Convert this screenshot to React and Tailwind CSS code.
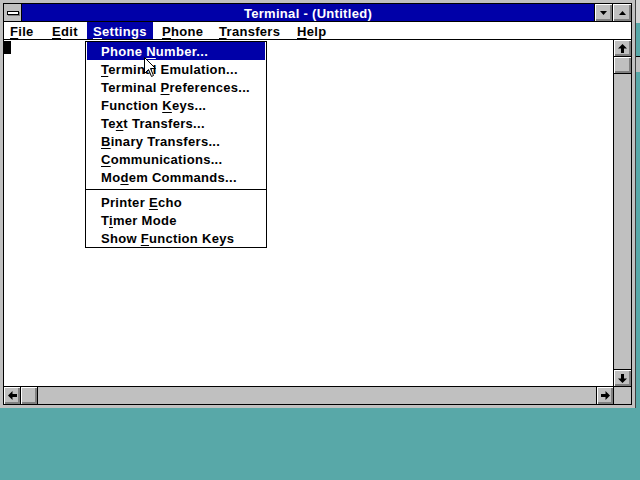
import React from "react";

const bevel = "bg-[#c0c0c0] shadow-[inset_1px_1px_0_#ffffff,inset_-1px_-1px_0_#808080,inset_-2px_-2px_0_#808080]";

function ArrowUp() {
  return (
    <svg width="9" height="9" viewBox="0 0 9 9"><path d="M4.5 0 L9 4.5 L6 4.5 L6 9 L3 9 L3 4.5 L0 4.5 Z" fill="#000" /></svg>
  );
}
function ArrowDown() {
  return (
    <svg width="9" height="9" viewBox="0 0 9 9"><path d="M4.5 9 L9 4.5 L6 4.5 L6 0 L3 0 L3 4.5 L0 4.5 Z" fill="#000" /></svg>
  );
}
function ArrowLeft() {
  return (
    <svg width="9" height="9" viewBox="0 0 9 9"><path d="M0 4.5 L4.5 0 L4.5 3 L9 3 L9 6 L4.5 6 L4.5 9 Z" fill="#000" /></svg>
  );
}
function ArrowRight() {
  return (
    <svg width="9" height="9" viewBox="0 0 9 9"><path d="M9 4.5 L4.5 0 L4.5 3 L0 3 L0 6 L4.5 6 L4.5 9 Z" fill="#000" /></svg>
  );
}

function U({ children }) {
  return <span className="underline underline-offset-[2px] decoration-[1px]">{children}</span>;
}

const items1 = [
  [<>Phone <U>N</U>umber...</>, true],
  [<><U>T</U>erminal Emulation...</>],
  [<>Terminal <U>P</U>references...</>],
  [<>Function <U>K</U>eys...</>],
  [<>Te<U>x</U>t Transfers...</>],
  [<><U>B</U>inary Transfers...</>],
  [<><U>C</U>ommunications...</>],
  [<>Mo<U>d</U>em Commands...</>],
];
const items2 = [
  <>Printer <U>E</U>cho</>,
  <>T<U>i</U>mer Mode</>,
  <>Show <U>F</U>unction Keys</>,
];

export default function App() {
  return (
    <div
      className="relative w-[640px] h-[480px] bg-[#58a8a8] overflow-hidden text-[13px] font-bold leading-none tracking-[0.3px]"
      style={{ fontFamily: '"Liberation Sans", Arial, sans-serif' }}
    >
      {/* sliver of a window behind */}
      <div className="absolute left-[636px] top-0 w-[4px] h-[23px] bg-[#d4d4d4]" />
      <div className="absolute left-[636px] top-[56px] w-[4px] h-[16px] bg-[#c0c0c0] border-t border-black" />

      {/* main window */}
      <div className="w-[636px] h-[408px] bg-[#c0c0c0] p-[3px] border-r border-[#404040]">
        <div className="w-full h-full border border-black flex flex-col">
          {/* title bar */}
          <div className="h-[18px] flex border-b border-black shrink-0">
            <div className="w-[18px] bg-[#c0c0c0] border-r border-black flex items-center justify-center">
              <div className="w-[12px] h-[4px] bg-white border border-black shadow-[1px_1px_0_#808080]" />
            </div>
            <div className="flex-1 bg-[#0000a8] text-white flex items-center justify-center pt-[2px]">
              <span>Terminal - (Untitled)</span>
            </div>
            <div className={`w-[18px] border-l border-black flex items-center justify-center ${bevel}`}>
              <svg width="7" height="4" viewBox="0 0 7 4"><path d="M0 0 L7 0 L3.5 4 Z" fill="#000" /></svg>
            </div>
            <div className={`w-[19px] border-l border-black flex items-center justify-center ${bevel}`}>
              <svg width="7" height="4" viewBox="0 0 7 4"><path d="M0 4 L7 4 L3.5 0 Z" fill="#000" /></svg>
            </div>
          </div>

          {/* menu bar */}
          <div className="h-[18px] bg-white border-b border-black flex items-stretch shrink-0">
            <div className="w-[42px] pl-[6px] pt-[2px] flex items-center"><span><U>F</U>ile</span></div>
            <div className="w-[41px] pl-[6px] pt-[2px] flex items-center"><span><U>E</U>dit</span></div>
            <div className="w-[66px] pl-[6px] pt-[2px] flex items-center bg-[#0000a8] text-white"><span><U>S</U>ettings</span></div>
            <div className="w-[60px] pl-[9px] pt-[2px] flex items-center"><span><U>P</U>hone</span></div>
            <div className="w-[78px] pl-[6px] pt-[2px] flex items-center"><span><U>T</U>ransfers</span></div>
            <div className="pl-[6px] pt-[2px] flex items-center"><span><U>H</U>elp</span></div>
          </div>

          {/* client + vertical scrollbar */}
          <div className="flex-1 flex min-h-0">
            <div className="flex-1 bg-white">
              <div className="w-[7px] h-[13px] bg-black mt-[1px]" />
            </div>
            <div className="w-[18px] border-l border-black bg-[#c0c0c0] flex flex-col">
              <div className={`h-[17px] border-b border-black flex items-center justify-center ${bevel}`}><ArrowUp /></div>
              <div className={`h-[17px] border-b border-black ${bevel}`} />
              <div className="flex-1 bg-[#c0c0c0]" />
              <div className={`h-[17px] border-t border-black flex items-center justify-center ${bevel}`}><ArrowDown /></div>
            </div>
          </div>

          {/* horizontal scrollbar */}
          <div className="h-[18px] border-t border-black flex shrink-0">
            <div className={`w-[17px] border-r border-black flex items-center justify-center ${bevel}`}><ArrowLeft /></div>
            <div className={`w-[17px] border-r border-black ${bevel}`} />
            <div className="flex-1 bg-[#c0c0c0]" />
            <div className={`w-[17px] border-l border-black flex items-center justify-center ${bevel}`}><ArrowRight /></div>
            <div className="w-[18px] border-l border-black bg-[#c0c0c0]" />
          </div>
        </div>
      </div>

      {/* dropdown menu */}
      <div className="absolute left-[85px] top-[41px] w-[182px] h-[207px] bg-white border border-black px-[1px] pb-[1px] flex flex-col">
        {items1.map(([label, active], i) => (
          <div
            key={i}
            className={`h-[18px] pl-[14px] flex items-center shrink-0 ${active ? "bg-[#0000a8] text-white" : "text-black"}`}
          >
            <span>{label}</span>
          </div>
        ))}
        <div className="h-[7px] flex items-center shrink-0 -mx-[1px]">
          <div className="w-full h-[1px] bg-black" />
        </div>
        {items2.map((label, i) => (
          <div key={i} className="h-[18px] pl-[14px] flex items-center shrink-0 text-black">
            <span>{label}</span>
          </div>
        ))}
      </div>

      {/* mouse pointer */}
      <svg className="absolute left-[144px] top-[57px]" width="13" height="21" viewBox="0 0 13 21">
        <path d="M0.5 0.5 L0.5 16.5 L4.5 12.5 L7.5 19.5 L9.5 18.5 L6.5 11.5 L11.5 11.5 Z" fill="#fff" stroke="#000" strokeWidth="1" />
      </svg>
    </div>
  );
}
